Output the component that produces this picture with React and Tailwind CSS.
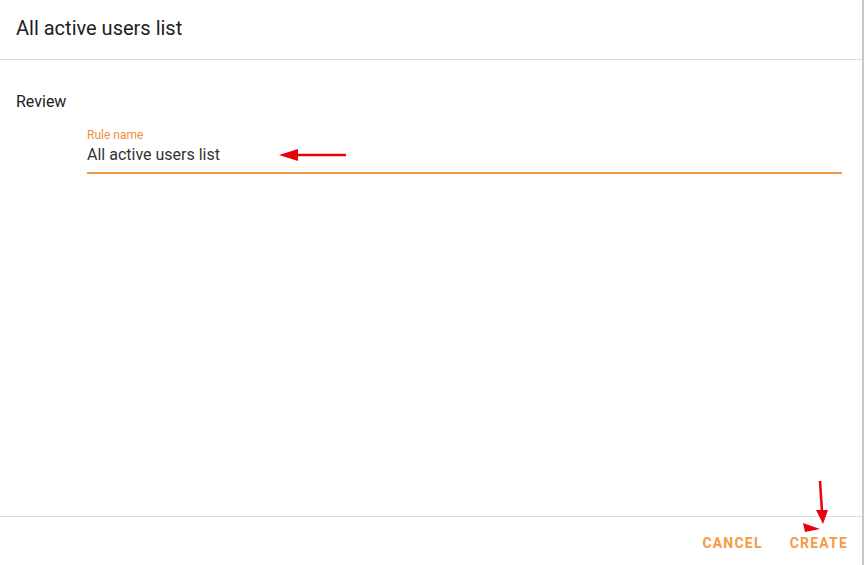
export default function App() {
  return (
    <div
      className="relative flex h-[565px] w-[864px] flex-col bg-white text-[#212121]"
      style={{ fontFamily: 'Roboto, "Liberation Sans", sans-serif' }}
    >
      <div className="flex flex-1 flex-col border-r-2 border-[#c8c8c8] w-[864px]">
        {/* Header */}
        <div className="flex h-[60px] items-center border-b border-[#dcdcdc] px-4">
          <h1 className="text-[20px] font-normal leading-none -mt-[4px]">All active users list</h1>
        </div>

        {/* Body */}
        <div className="flex-1 px-4 pt-[33px]">
          <div className="text-[16px] leading-[18px]">Review</div>
          <div className="ml-[71px] mr-[4px] mt-[17px] border-b-2 border-[#ee9a48] pb-[7px]">
            <div className="text-[12px] leading-[14px] text-[#f0913a]">Rule name</div>
            <div className="mt-[3px] text-[16px] leading-[20px] text-[#333]">All active users list</div>
          </div>
        </div>

        {/* Footer */}
        <div className="flex h-[49px] items-center justify-end gap-[27px] border-t border-[#dcdcdc] pr-[14px] pt-[5px]">
          <button className="text-[14px] font-bold uppercase tracking-[1.2px] text-[#f59a45]">Cancel</button>
          <button className="text-[14px] font-bold uppercase tracking-[1.2px] text-[#f59a45]">Create</button>
        </div>
      </div>

      {/* Annotation arrows */}
      <svg className="absolute left-0 top-0 pointer-events-none" width="864" height="565">
        <line x1="346" y1="155" x2="292" y2="155" stroke="#e8000b" strokeWidth="2.5" />
        <polygon points="279,155 298,149 298,161" fill="#e8000b" />
        <line x1="820" y1="481" x2="822" y2="512" stroke="#e8000b" strokeWidth="2.5" />
        <polygon points="816,510 828,510 823,524" fill="#e8000b" />
        <polygon points="803,523 805,532 820,529" fill="#e8000b" />
      </svg>
    </div>
  )
}
